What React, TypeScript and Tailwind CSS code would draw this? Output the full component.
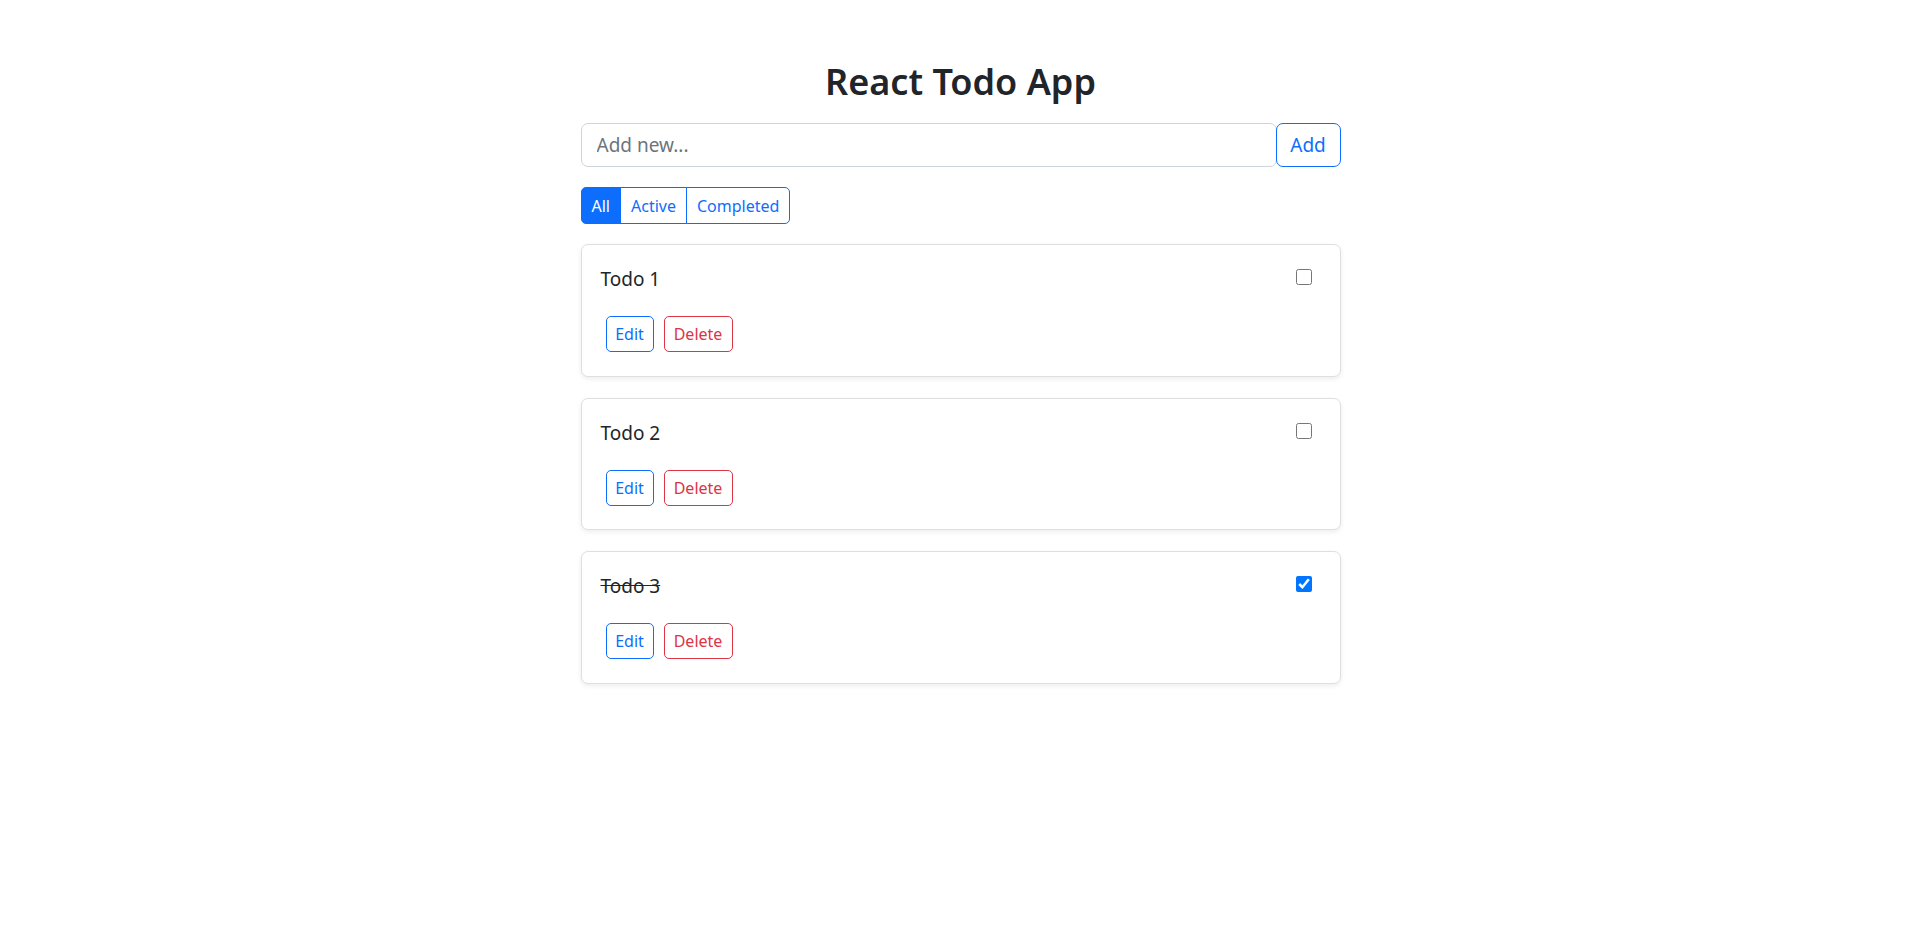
import { useState } from "react";

type Todo = { id: number; text: string; done: boolean };

const initialTodos: Todo[] = [
  { id: 1, text: "Todo 1", done: false },
  { id: 2, text: "Todo 2", done: false },
  { id: 3, text: "Todo 3", done: true },
];

const filters = ["All", "Active", "Completed"] as const;

export default function App() {
  const [todos, setTodos] = useState<Todo[]>(initialTodos);
  const [filter, setFilter] = useState<(typeof filters)[number]>("All");
  const [draft, setDraft] = useState("");

  const toggle = (id: number) =>
    setTodos((t) => t.map((x) => (x.id === id ? { ...x, done: !x.done } : x)));

  const visible = todos.filter((t) =>
    filter === "All" ? true : filter === "Active" ? !t.done : t.done
  );

  return (
    <div className="min-h-screen bg-white text-[#212529] font-['Segoe_UI','Noto_Sans',sans-serif]">
      <div className="mx-auto w-[760px] pt-[61px]">
        <h1 className="text-center text-[36px] leading-[42px] font-semibold mb-[20px]">
          React Todo App
        </h1>

        {/* add row */}
        <div className="flex h-[44px]">
          <input
            value={draft}
            onChange={(e) => setDraft(e.target.value)}
            placeholder="Add new..."
            className="flex-1 min-w-0 h-full rounded-[7px] border border-[#ced4da] px-[15px] text-[19px] text-[#212529] placeholder:text-[#6c757d] outline-none"
          />
          <button className="w-[65px] h-full rounded-[7px] border border-[#0d6efd] text-[#0d6efd] text-[19px] -ml-px">
            Add
          </button>
        </div>

        {/* filter group */}
        <div className="flex mt-[20px] mb-[20px] h-[37px]">
          {filters.map((f, i) => (
            <button
              key={f}
              onClick={() => setFilter(f)}
              className={`h-full px-[10px] text-[16px] border border-[#0d6efd] ${
                i === 0 ? "rounded-l-[5px]" : "-ml-px"
              } ${i === filters.length - 1 ? "rounded-r-[5px]" : ""} ${
                filter === f ? "bg-[#0d6efd] text-white" : "bg-white text-[#0d6efd]"
              }`}
            >
              {f}
            </button>
          ))}
        </div>

        <div className="flex flex-col gap-[21px]">
          {visible.map((t) => (
            <div
              key={t.id}
              className="rounded-[7px] border border-[#dedfe0] bg-white p-[19px] shadow-[0_2px_5px_rgba(0,0,0,0.075)]"
            >
              <div className="flex items-start justify-between">
                <span className={`text-[19px] leading-[30px] ${t.done ? "line-through" : ""}`}>
                  {t.text}
                </span>
                <input
                  type="checkbox"
                  checked={t.done}
                  onChange={() => toggle(t.id)}
                  className="w-4 h-4 mt-[5px] mr-[9px] accent-[#0075ff]"
                />
              </div>
              <div className="flex gap-[10px] mt-[22px] ml-[5px] mb-[4.5px]">
                <button className="h-[36px] w-[48px] rounded-[5px] border border-[#0d6efd] text-[#0d6efd] text-[16px]">
                  Edit
                </button>
                <button
                  onClick={() => setTodos((x) => x.filter((y) => y.id !== t.id))}
                  className="h-[36px] w-[69px] rounded-[5px] border border-[#dc3545] text-[#dc3545] text-[16px]"
                >
                  Delete
                </button>
              </div>
            </div>
          ))}
        </div>
      </div>
    </div>
  );
}
